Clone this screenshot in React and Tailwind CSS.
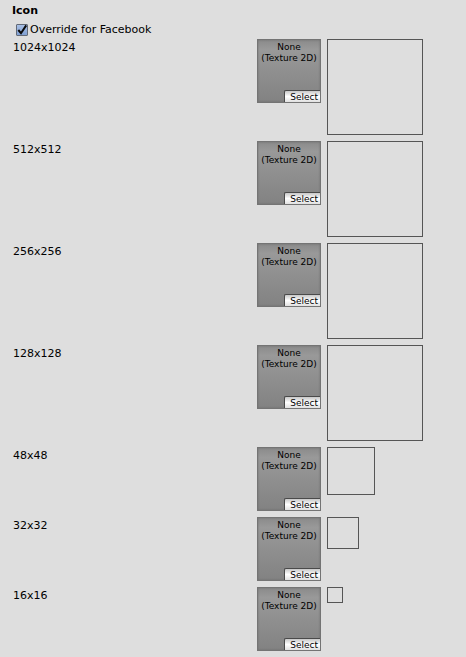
import { useState } from "react";

const ICON_SLOTS = [
  { size: 1024, preview: "size-24" },
  { size: 512, preview: "size-24" },
  { size: 256, preview: "size-24" },
  { size: 128, preview: "size-24" },
  { size: 48, preview: "size-12" },
  { size: 32, preview: "size-8" },
  { size: 16, preview: "size-4" },
];

function OverrideToggle() {
  const [checked, setChecked] = useState(true);
  return (
    <label className="flex h-4 items-center pl-4 text-[11px] leading-4">
      <span className="relative mr-0.5 block size-3">
        <input
          type="checkbox"
          checked={checked}
          onChange={(e) => setChecked(e.target.checked)}
          className="block size-3 appearance-none rounded-[1px] border border-[#626a78] bg-linear-to-b from-[#a9c0e6] to-[#7f9fd2]"
        />
        {checked && (
          <svg
            viewBox="0 0 12 12"
            className="pointer-events-none absolute inset-0 size-3"
            fill="none"
            stroke="#0a0a0a"
            strokeWidth="2"
            aria-hidden="true"
          >
            <path d="M2.3 6 L5 9.2 L10.2 1.4" />
          </svg>
        )}
      </span>
      Override for Facebook
    </label>
  );
}

function TextureField({ name }) {
  return (
    <div className="flex size-16 flex-col items-end justify-between border border-[#747474] bg-linear-to-b from-[#8b8b8b] via-[#999999] via-15% to-[#828282] shadow-[inset_0_0_2px_#6a6a6a]">
      <p className="w-full pt-0.5 text-center text-[9px] leading-[11px] whitespace-nowrap">
        None
        <br />
        (Texture 2D)
      </p>
      <button
        type="button"
        aria-label={"Select " + name}
        className="h-3 w-9 rounded-tl-[2px] border-t border-l border-[#4a4a4a] bg-linear-to-b from-[#c8c8c8] via-[#ffffff] to-[#e0e0e0] pr-0.5 text-right text-[9px] leading-3"
      >
        Select
      </button>
    </div>
  );
}

function IconRow({ size, preview }) {
  const name = size + "x" + size;
  return (
    <li className="flex items-start gap-1.5">
      <span className="flex-1 text-[11px] leading-[18px]">{name}</span>
      <TextureField name={name} />
      <div className="w-24">
        <div className={"border border-[#555555] " + preview} />
      </div>
    </li>
  );
}

export default function App() {
  return (
    <main className="min-h-screen bg-[#dedede] pt-[3px] pb-1.5 font-['DejaVu_Sans',sans-serif] text-black">
      <h2 className="mb-[3px] pl-3 text-[11px] leading-4 font-bold">Icon</h2>
      <OverrideToggle />
      <ul className="mt-px flex flex-col gap-1.5 pr-[43px] pl-[13px]">
        {ICON_SLOTS.map((slot) => (
          <IconRow key={slot.size} {...slot} />
        ))}
      </ul>
    </main>
  );
}
